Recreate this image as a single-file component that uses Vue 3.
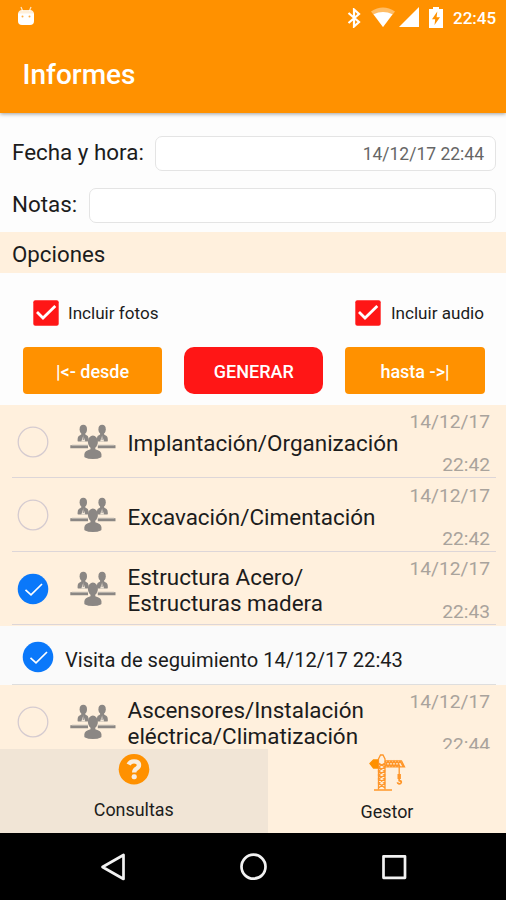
<script setup>
import { ref } from 'vue'

const withPhotos = ref(true)
const withAudio = ref(true)

const items = ref([
  { title: ['Implantación/Organización'], date: '14/12/17', time: '22:42', checked: false },
  { title: ['Excavación/Cimentación'], date: '14/12/17', time: '22:42', checked: false },
  {
    title: ['Estructura Acero/', 'Estructuras madera'],
    date: '14/12/17',
    time: '22:43',
    checked: true,
    visit: { label: 'Visita de seguimiento 14/12/17 22:43', checked: true }
  },
  { title: ['Ascensores/Instalación', 'eléctrica/Climatización'], date: '14/12/17', time: '22:44', checked: false }
])
</script>

<template>
  <div class="screen">
    <header class="top">
      <div class="status">
        <svg class="debug" viewBox="0 0 18 20" width="18" height="20">
          <path d="M4 1l1.600 4M14 1l-1.600 4" stroke="#fff" stroke-opacity=".75" stroke-width="1.300" />
          <path d="M1 8.500Q1 4 5 4h8q4 0 4 4.500z" fill="#fff" fill-opacity=".85" />
          <path d="M1 7.500h16V15q0 4-4 4H5q-4 0-4-4z" fill="#fff" />
          <circle cx="5.500" cy="10.500" r="1" fill="#ffad45" />
          <circle cx="12.500" cy="10.500" r="1" fill="#ffad45" />
        </svg>
        <div class="signals">
          <svg class="bt" viewBox="0 0 14 20" width="14" height="20" fill="none" stroke="#fff" stroke-width="2.200">
            <path d="M1.500 5l10.500 9-5 4.500V1.500L12 6 1.500 15" />
          </svg>
          <svg class="wifi" viewBox="0 0 24 20" width="24" height="20">
            <path d="M0 4.500Q12-3.500 24 4.500L12 20z" fill="#fff" fill-opacity=".4" />
            <path d="M2.500 7.200Q12 2.800 21.500 7.200L12 20z" fill="#fff" />
          </svg>
          <svg class="cell" viewBox="0 0 20 20" width="20" height="20"><path d="M20 0v20H0z" fill="#fff" /></svg>
          <svg class="battery" viewBox="0 0 14 21" width="14" height="21">
            <path d="M4 0h6v2h4v19H0V2h4z" fill="#fff" />
            <path d="M8.300 4.500L3 12.200h3.200L5.500 18 11 10.200H7.600z" fill="#ff9100" />
          </svg>
          <span class="clock">22:45</span>
        </div>
      </div>
      <h1 class="title">Informes</h1>
    </header>

    <main class="body">
      <div class="form">
        <div class="field">
          <label class="label when">Fecha y hora:</label>
          <div class="input">14/12/17 22:44</div>
        </div>
        <div class="field">
          <label class="label notes">Notas:</label>
          <div class="input"></div>
        </div>
      </div>

      <div class="section"><span>Opciones</span></div>

      <div class="options">
        <div class="option" @click="withPhotos = !withPhotos">
          <svg viewBox="0 0 26 26" width="26" height="26">
            <rect x=".3" y=".3" width="25.400" height="25.400" rx="2" fill="#ff1616" />
            <path v-if="withPhotos" d="M4 12l6 6L22.300 6" fill="none" stroke="#fff" stroke-width="2.800" />
          </svg>
          <span>Incluir fotos</span>
        </div>
        <div class="option" @click="withAudio = !withAudio">
          <svg viewBox="0 0 26 26" width="26" height="26">
            <rect x=".3" y=".3" width="25.400" height="25.400" rx="2" fill="#ff1616" />
            <path v-if="withAudio" d="M4 12l6 6L22.300 6" fill="none" stroke="#fff" stroke-width="2.800" />
          </svg>
          <span>Incluir audio</span>
        </div>
      </div>

      <div class="actions">
        <button class="btn">|&lt;- desde</button>
        <button class="btn primary">GENERAR</button>
        <button class="btn">hasta -&gt;|</button>
      </div>

      <div class="list">
        <template v-for="(item, i) in items" :key="i">
          <div class="row">
            <svg class="radio" viewBox="0 0 32 32" width="32" height="32" fill="none">
              <template v-if="item.checked">
                <circle cx="16" cy="16" r="15.300" fill="#0a78fa" />
                <path d="M8.500 16.800l5.500 5L25 11" stroke="#fff" stroke-width="1.700" />
              </template>
              <circle v-else cx="16" cy="16" r="14.800" stroke="#d5cbd0" stroke-width="1.300" />
            </svg>
            <svg class="people" viewBox="0 0 46 36" width="46" height="36" fill="#8b8784">
              <ellipse cx="13.300" cy="5.300" rx="3.700" ry="4.500" />
              <path d="M11.300 8h4v2.600l2.500 1.400 1 3-1 2.500H8l-.4-.5q-.2-4 1.200-5l2.500-1.400z" />
              <path d="M13.300 11.500l2 6h-4z" fill="#f3e8d9" />
              <path d="M13.300 12v4" stroke="#8b8784" stroke-width=".9" />
              <ellipse cx="32.100" cy="5.300" rx="3.700" ry="4.500" />
              <path d="M34.100 8h-4v2.600L27.600 12l-1 3 1 2.500h9.800l.4-.5q.2-4-1.200-5l-2.500-1.400z" />
              <path d="M32.100 11.500l-2 6h4z" fill="#f3e8d9" />
              <path d="M32.100 12v4" stroke="#8b8784" stroke-width=".9" />
              <path d="M.3 21.300h17.700v3H.3zM27.800 21.300h17.700v3H27.800z" />
              <path d="M2 21.200h16M28 21.200h16" stroke="#c4bdb5" stroke-width=".9" />
              <ellipse cx="22.900" cy="18" rx="5" ry="6.500" />
              <path d="M20.500 22h4.800v3.300q6 1.500 6.200 5.200.2 2.500-.7 3-2.800 1.500-7.900 1.500t-7.900-1.500q-.9-.5-.7-3 .2-3.700 6.200-5.200z" />
            </svg>
            <div class="name">
              <span v-for="line in item.title" :key="line">{{ line }}</span>
            </div>
            <div class="stamp">
              <span>{{ item.date }}</span>
              <span>{{ item.time }}</span>
            </div>
          </div>
          <div v-if="item.visit" class="visit">
            <svg viewBox="0 0 32 32" width="32" height="32" fill="none">
              <circle cx="16" cy="16" r="15.300" fill="#0a78fa" />
              <path d="M8.500 16.800l5.500 5L25 11" stroke="#fff" stroke-width="1.700" />
            </svg>
            <span>{{ item.visit.label }}</span>
          </div>
        </template>
      </div>
    </main>

    <nav class="tabs">
      <div class="tab active">
        <svg viewBox="0 0 32 32" width="32" height="32">
          <circle cx="16" cy="16.300" r="15.300" fill="#ff9100" />
          <path d="M10.600 11.600Q12.200 8.400 16 8.400q5 0 5 3.700 0 2.200-2.400 3.500-2.400 1.300-2.400 4" fill="none" stroke="#f8eee0" stroke-width="4.400" stroke-linejoin="round" />
          <rect x="13.700" y="21.300" width="5" height="5" rx="2" fill="#f8eee0" />
        </svg>
        <span>Consultas</span>
      </div>
      <div class="tab">
        <svg class="crane" viewBox="0 0 38 38" width="38" height="38" fill="none" stroke="#ff9629" stroke-width="1.300">
          <path d="M10.500 36.500V6l2-4h2.500l2 4v30.500M10.500 10l6.500 4-6.500 4 6.500 4-6.500 4 6.500 4-6.500 5M17 10l-6.500 4 6.500 4-6.500 4 6.500 4-6.500 4 6.500 5" />
          <path d="M17 7.800h16.500l3 6H17M17 13.500l3-5.500 3 5.500 3-5.500 3 5.500 3-5.500 3 5.500M17 8l3 5.500L23 8l3 5.500L29 8l3 5.500" />
          <path d="M2 10.500l3.500-3.500h4v8h-4z" fill="#ff9100" stroke="#ff9100" />
          <path d="M31.200 13v8M6 37h18" />
          <path d="M31.200 21v5" stroke-width="3.400" />
          <path d="M31.200 25v2.500q2.300.5 2 2-.5 1.500-2.200 1.300-1.500-.3-1.500-1.500" stroke-width="1.800" />
        </svg>
        <span>Gestor</span>
      </div>
    </nav>

    <footer class="navbar">
      <svg viewBox="0 0 28 30" width="28" height="30" fill="none" stroke="#f2f2f2" stroke-width="2.700" stroke-linejoin="round">
        <path d="M24.500 3v24L3.500 15z" />
      </svg>
      <svg viewBox="0 0 28 30" width="28" height="30" fill="none" stroke="#f2f2f2" stroke-width="2.700">
        <circle cx="13.500" cy="14.700" r="12" />
      </svg>
      <svg viewBox="0 0 28 30" width="28" height="30" fill="none" stroke="#f2f2f2" stroke-width="2.700" stroke-linejoin="round">
        <rect x="3.500" y="4.300" width="21.500" height="21.500" />
      </svg>
    </footer>
  </div>
</template>

<style>
body {
  margin: 0;
}
</style>

<style scoped>
.screen {
  width: 506px;
  height: 900px;
  display: flex;
  flex-direction: column;
  overflow: hidden;
  background: #fdfdfd;
  color: #1c1c1c;
  font-family: Roboto, "Liberation Sans", sans-serif;
  white-space: nowrap;
}
.top {
  flex: none;
  height: 113px;
  background: #ff9100;
  color: #fff;
  box-shadow: 0 1px 4px rgba(0, 0, 0, .38);
  z-index: 1;
}
.status {
  height: 36px;
  display: flex;
  justify-content: space-between;
  padding: 0 10px 0 17px;
}
.debug { margin-top: 6px; }
.signals {
  display: flex;
  align-items: flex-start;
  padding-top: 7px;
}
.bt { margin-right: 10px; margin-top: 1px; }
.wifi { margin-right: 4px; }
.cell { margin-right: 10px; }
.battery { margin-right: 10px; }
.clock {
  width: 43px;
  font-size: 17px;
  font-weight: 500;
  line-height: 22px;
}
.title {
  margin: 22px 0 0 22.500px;
  font-size: 28px;
  font-weight: 500;
  line-height: 34px;
}
.body {
  flex: none;
  height: 636px;
  overflow: hidden;
}
.form {
  display: flex;
  flex-direction: column;
  gap: 17px;
  padding: 23px 10px 0 12px;
  height: 96px;
}
.field {
  display: flex;
  align-items: center;
  height: 35px;
}
.label {
  flex: none;
  padding-bottom: 4px;
  font-size: 22.400px;
  line-height: 30px;
}
.when { width: 143px; }
.notes { width: 76.500px; }
.input {
  flex: 1;
  height: 35px;
  box-sizing: border-box;
  border: 1.500px solid #e4e4e4;
  border-radius: 7px;
  background: #fff;
  padding-right: 11px;
  text-align: right;
  font-size: 17.500px;
  line-height: 35px;
  color: #666;
}
.section {
  display: flex;
  align-items: center;
  height: 41px;
  box-sizing: border-box;
  padding: 2px 0 0 12px;
  background: #fff0dd;
  font-size: 22.300px;
}
.options {
  display: flex;
  justify-content: space-between;
  padding: 27px 22px 0 32.500px;
  height: 47px;
}
.option {
  display: flex;
  height: 26px;
  align-items: center;
  gap: 9.500px;
  font-size: 17.100px;
}
.actions {
  display: flex;
  gap: 22px;
  padding: 0 21.500px 11px 23px;
}
.btn {
  flex: 1;
  height: 47px;
  border: 0;
  border-radius: 4px;
  padding: 2px 0 0;
  background: #ff9100;
  color: #fff;
  font-family: inherit;
  font-size: 18px;
  font-weight: 500;
}
.primary {
  border-radius: 10px;
  background: #ff1616;
}
.row {
  display: flex;
  align-items: center;
  box-sizing: border-box;
  height: 73.500px;
  padding: 0 16px 0 16.500px;
  background: linear-gradient(#ddd6d8, #ddd6d8) 12px 100% / 484px 1.200px no-repeat #fff0dd;
}
.radio { flex: none; }
.people {
  flex: none;
  margin: 0 12px 0 21px;
}
.name {
  flex: 1;
  display: flex;
  flex-direction: column;
  padding-top: 3px;
  font-size: 22.450px;
  line-height: 26.500px;
}
.stamp {
  flex: none;
  display: flex;
  flex-direction: column;
  align-self: flex-start;
  align-items: flex-end;
  margin-top: -5px;
  font-size: 19.200px;
  line-height: 43px;
  color: #a9a39c;
}
.visit {
  display: flex;
  align-items: center;
  gap: 11px;
  box-sizing: border-box;
  height: 59.500px;
  padding: 3px 0 0 22px;
  background: linear-gradient(#dedede, #dedede) 12px 100% / 484px 1.200px no-repeat #fafafa;
  font-size: 20.150px;
}
.visit span { padding-top: 6px; }
.tabs {
  flex: none;
  display: flex;
  height: 84px;
  background: #fff0dd;
}
.tab {
  flex: none;
  width: 239px;
  display: flex;
  flex-direction: column;
  align-items: center;
  box-sizing: border-box;
  padding-top: 4px;
  font-size: 17.900px;
  line-height: 22px;
}
.active {
  width: 267.500px;
  background: #f1e5d6;
}
.active span { margin-top: 14px; }
.crane { margin-bottom: 10px; }
.navbar {
  flex: none;
  height: 67px;
  display: flex;
  justify-content: space-between;
  align-items: center;
  box-sizing: border-box;
  padding: 0 98px 0 99px;
  background: #000;
}
</style>
